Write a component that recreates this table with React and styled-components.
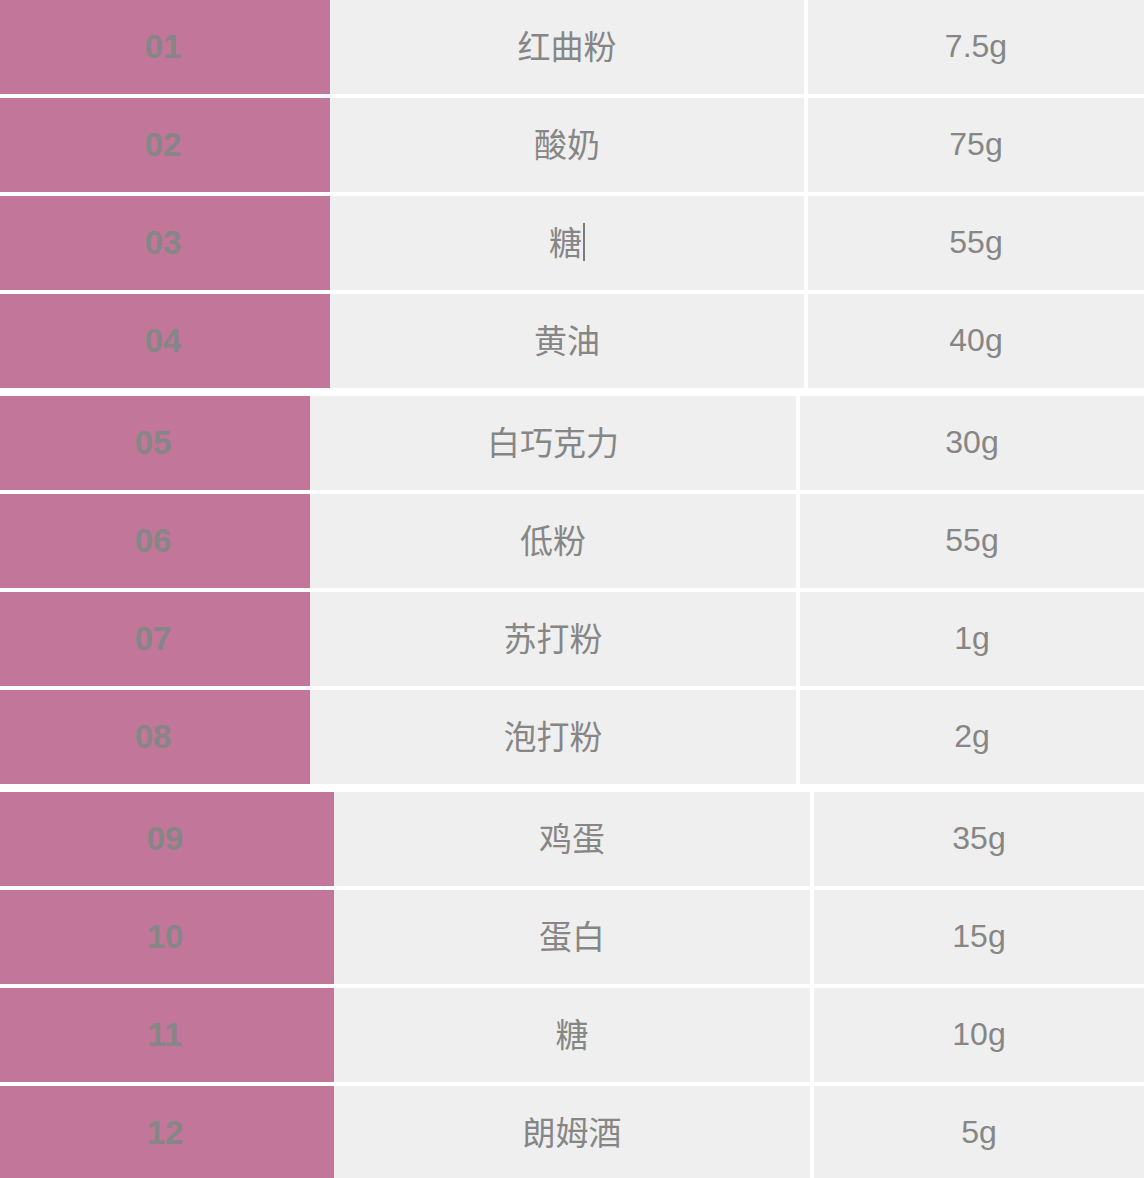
import styled, { createGlobalStyle } from 'styled-components';

const groups = [
  {
    idWidth: 334,
    nameWidth: 474,
    rows: [
      { id: '01', name: '红曲粉', amount: '7.5g' },
      { id: '02', name: '酸奶', amount: '75g' },
      { id: '03', name: '糖', amount: '55g', caret: true },
      { id: '04', name: '黄油', amount: '40g' },
    ],
  },
  {
    idWidth: 314,
    nameWidth: 486,
    rows: [
      { id: '05', name: '白巧克力', amount: '30g' },
      { id: '06', name: '低粉', amount: '55g' },
      { id: '07', name: '苏打粉', amount: '1g' },
      { id: '08', name: '泡打粉', amount: '2g' },
    ],
  },
  {
    idWidth: 338,
    nameWidth: 476,
    rows: [
      { id: '09', name: '鸡蛋', amount: '35g' },
      { id: '10', name: '蛋白', amount: '15g' },
      { id: '11', name: '糖', amount: '10g' },
      { id: '12', name: '朗姆酒', amount: '5g' },
    ],
  },
];

const App = () => {
  return (
    <>
      <GlobalStyle />
      <Page>
        {groups.map((group, gi) => (
          <Table key={gi}>
            {group.rows.map((row) => (
              <Row key={row.id} $idWidth={group.idWidth} $nameWidth={group.nameWidth}>
                <IdCell>{row.id}</IdCell>
                <NameCell>
                  {row.name}
                  {row.caret && <Caret />}
                </NameCell>
                <AmountCell>{row.amount}</AmountCell>
              </Row>
            ))}
          </Table>
        ))}
      </Page>
    </>
  );
};

const GlobalStyle = createGlobalStyle`
  html, body {
    margin: 0;
    padding: 0;
    background: #ffffff;
    overflow: hidden;
  }
`;

const Page = styled.div`
  display: flex;
  flex-direction: column;
  gap: 8px;
  margin-left: -4px;
  font-family: "Liberation Sans", "Noto Sans CJK SC", sans-serif;
`;

const Table = styled.div`
  display: flex;
  flex-direction: column;
  gap: 4px;
`;

const Row = styled.div`
  display: grid;
  grid-template-columns: ${(p) => p.$idWidth}px ${(p) => p.$nameWidth}px 1fr;
  height: 94px;
`;

const Cell = styled.div`
  display: flex;
  align-items: center;
  justify-content: center;
  font-size: 32px;
  line-height: 1;
  color: #868686;
`;

const IdCell = styled(Cell)`
  background: #c27699;
  font-size: 33px;
  font-weight: 700;
  padding-bottom: 1px;
`;

const NameCell = styled(Cell)`
  background: #efefef;
  font-size: 33px;
  font-family: "Noto Sans CJK SC", "Liberation Sans", sans-serif;
  padding-bottom: 3px;
`;

const AmountCell = styled(Cell)`
  background: #efefef;
  margin-left: 4px;
  padding-bottom: 2px;
`;

const Caret = styled.span`
  display: inline-block;
  width: 2px;
  height: 38px;
  margin-left: 1px;
  background: #7a7a7a;
`;

export default App;
